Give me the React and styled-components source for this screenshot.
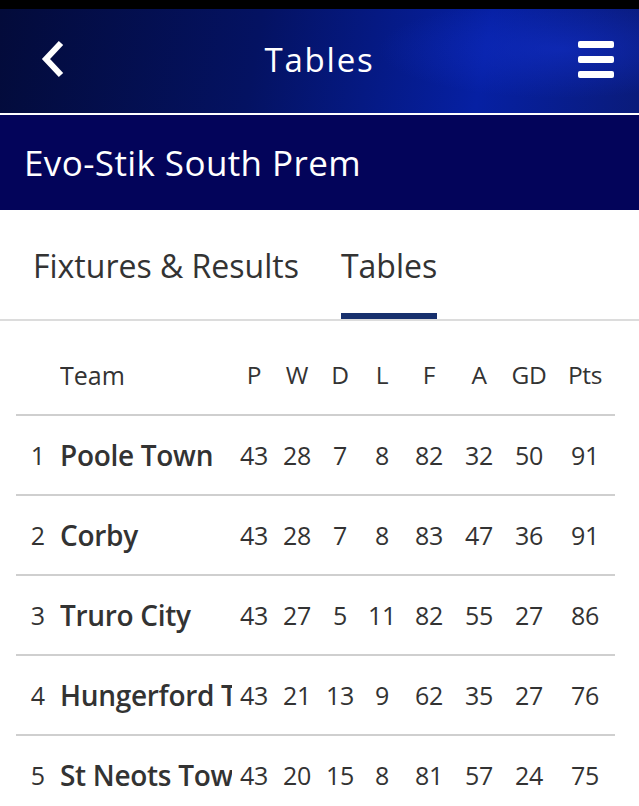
import React from 'react';
import styled, { createGlobalStyle } from 'styled-components';

const Global = createGlobalStyle`
  body {
    margin: 0;
    background: #ffffff;
    font-family: "Open Sans", "Noto Sans", sans-serif;
    color: #333333;
  }
`;

const Page = styled.div`
  width: 639px;
  height: 806px;
  overflow: hidden;
  background: #ffffff;
`;

const TopStrip = styled.div`
  height: 9px;
  background: #000000;
`;

const Header = styled.header`
  height: 104px;
  display: grid;
  grid-template-columns: 100px 1fr 100px;
  align-items: center;
  background:
    radial-gradient(ellipse 260px 70px at 560px 40px, rgba(20, 50, 210, 0.5), transparent 70%),
    linear-gradient(100deg, #030b3a 0%, #041262 40%, #0620a3 75%, #0a1b7a 100%);
  border-bottom: 2px solid #ffffff;
  color: #ffffff;
`;

const Title = styled.h1`
  margin: 0 0 4px;
  text-align: center;
  font-weight: 400;
  font-size: 33px;
  letter-spacing: 1.8px;
`;

const IconBtn = styled.div`
  display: flex;
  justify-content: ${(p) => (p.$right ? 'flex-end' : 'flex-start')};
  padding: ${(p) => (p.$right ? '0 25px 4px 0' : '0 0 4px 40px')};
`;

const Burger = styled.div`
  display: flex;
  flex-direction: column;
  gap: 8px;
  & > span {
    display: block;
    width: 36px;
    height: 7px;
    border-radius: 2px;
    background: #ffffff;
  }
`;

const League = styled.div`
  height: 95px;
  background: #03045a;
  color: #ffffff;
  display: flex;
  align-items: center;
  padding-left: 24px;
  font-size: 35px;
  letter-spacing: 0.4px;
`;

const Tabs = styled.nav`
  height: 109px;
  display: flex;
  gap: 42px;
  padding-left: 33px;
  border-bottom: 2px solid #dcdcdc;
`;

const Tab = styled.div`
  display: flex;
  align-items: center;
  font-size: 32px;
  color: #333333;
  letter-spacing: 0;
  border-bottom: 6px solid ${(p) => (p.$active ? '#17306d' : 'transparent')};
  padding-top: 8px;
`;

const Table = styled.div`
  margin: 0 24px 0 16px;
`;

const Row = styled.div`
  display: grid;
  grid-template-columns: 44px 172px 44px 42px 44px 40px 54px 46px 54px 58px;
  align-items: center;
  box-sizing: border-box;
  height: ${(p) => (p.$head ? '95px' : '80px')};
  padding-top: ${(p) => (p.$head ? '14px' : '0')};
  border-bottom: 2px solid #cfcfcf;
  font-size: ${(p) => (p.$head ? '24.5px' : '25px')};
  color: #333333;
`;

const Rank = styled.span`
  text-align: center;
`;

const Team = styled.span`
  font-weight: ${(p) => (p.$head ? 400 : 600)};
  font-size: ${(p) => (p.$head ? '25px' : '28px')};
  white-space: nowrap;
  overflow: hidden;
  letter-spacing: ${(p) => (p.$head ? '0' : '-0.3px')};
`;

const Cell = styled.span`
  text-align: center;
  letter-spacing: -0.3px;
`;

const cols = ['P', 'W', 'D', 'L', 'F', 'A', 'GD', 'Pts'];

const rows = [
  [1, 'Poole Town', 43, 28, 7, 8, 82, 32, 50, 91],
  [2, 'Corby', 43, 28, 7, 8, 83, 47, 36, 91],
  [3, 'Truro City', 43, 27, 5, 11, 82, 55, 27, 86],
  [4, 'Hungerford Town', 43, 21, 13, 9, 62, 35, 27, 76],
  [5, 'St Neots Town', 43, 20, 15, 8, 81, 57, 24, 75],
];

export default function App() {
  return (
    <Page>
      <Global />
      <TopStrip />
      <Header>
        <IconBtn>
          <svg width="26" height="38" viewBox="0 0 26 38">
            <path d="M21 3 L6 19 L21 35" fill="none" stroke="#fff" strokeWidth="6" />
          </svg>
        </IconBtn>
        <Title>Tables</Title>
        <IconBtn $right>
          <Burger>
            <span />
            <span />
            <span />
          </Burger>
        </IconBtn>
      </Header>
      <League>Evo-Stik South Prem</League>
      <Tabs>
        <Tab>Fixtures &amp; Results</Tab>
        <Tab $active>Tables</Tab>
      </Tabs>
      <Table>
        <Row $head>
          <Rank />
          <Team $head>Team</Team>
          {cols.map((c) => (
            <Cell key={c}>{c}</Cell>
          ))}
        </Row>
        {rows.map(([pos, name, ...stats]) => (
          <Row key={pos}>
            <Rank>{pos}</Rank>
            <Team>{name}</Team>
            {stats.map((s, i) => (
              <Cell key={i}>{s}</Cell>
            ))}
          </Row>
        ))}
      </Table>
    </Page>
  );
}
